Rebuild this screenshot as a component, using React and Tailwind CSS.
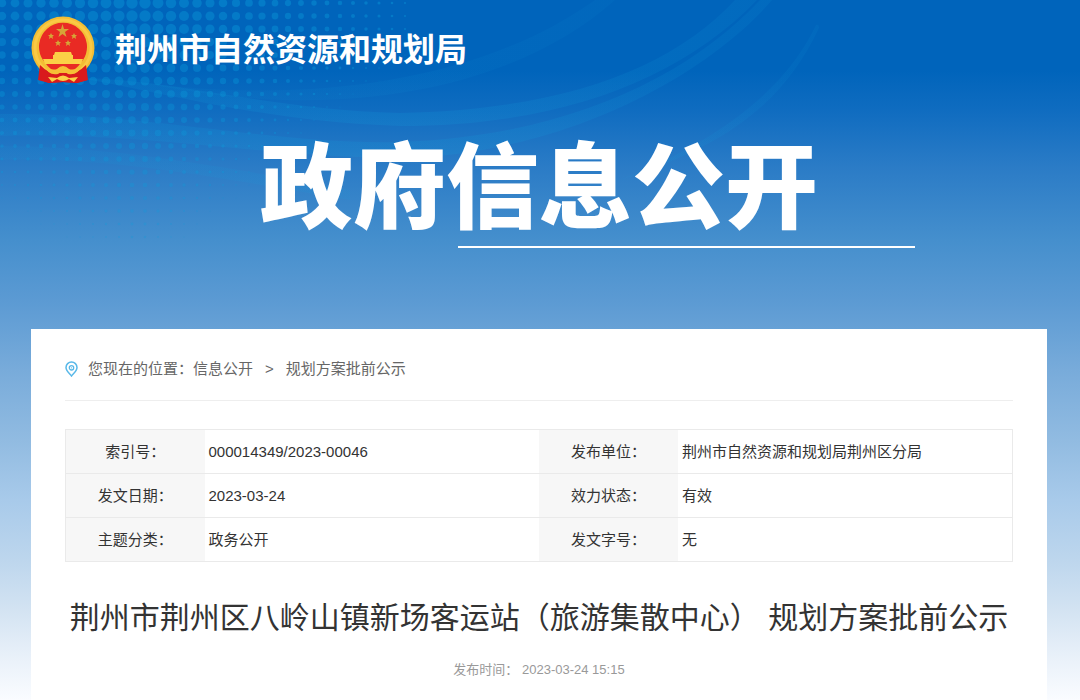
import React from "react";

const rows = [
  ["索引号：", "000014349/2023-00046", "发布单位：", "荆州市自然资源和规划局荆州区分局"],
  ["发文日期：", "2023-03-24", "效力状态：", "有效"],
  ["主题分类：", "政务公开", "发文字号：", "无"],
];

// 背景圆点：靠近 x = 140 处最大，向右和向下逐渐变小
const dots = [];
for (let r = 0; r < 19; r++) {
  for (let c = 0; c < 32; c++) {
    const x = 2 + c * 13;
    const y = 3 + r * 13;
    const size = 5.8 - Math.abs(x - 140) / (x < 140 ? 90 : 56) - Math.max(0, y - 30) / 46;
    if (size > 0.4) dots.push({ x, y, size });
  }
}

function Backdrop() {
  return (
    <svg className="absolute left-0 top-0" width="1080" height="330" viewBox="0 0 1080 330" aria-hidden="true">
      <defs>
        <linearGradient id="swirl" gradientUnits="userSpaceOnUse" x1="0" x2="830" y1="0" y2="0">
          <stop offset="0" stopColor="#12a0dc" stopOpacity="0.14" />
          <stop offset="0.5" stopColor="#12a0dc" stopOpacity="0.2" />
          <stop offset="1" stopColor="#12a0dc" stopOpacity="0.1" />
        </linearGradient>
      </defs>
      <g fill="#0a9ddc">
        {dots.map((d, i) => (
          <circle key={i} cx={d.x} cy={d.y} r={d.size} opacity={0.4 - d.y / 1600} />
        ))}
      </g>
      <g fill="url(#swirl)">
        <path opacity="0.4" d="M150 84C330 105 490 75 595 0L615 0C520 85 350 125 150 84Z" />
        <path opacity="0.9" d="M80 78C180 80 270 110 400 113C560 110 670 70 735 0L757 0C680 80 560 126 400 126C270 122 180 96 80 78Z" />
        <path opacity="0.9" d="M0 114C150 112 270 145 400 142C570 136 690 75 760 0L772 0C710 72 570 154 400 158C270 158 150 132 0 136Z" />
        <path opacity="0.6" d="M0 146C110 146 220 166 350 190L350 200C230 180 110 156 0 160Z" />
        <path opacity="0.8" d="M620 180C720 140 785 90 816 25Q819 24 819 28C785 100 730 145 620 180Z" />
      </g>
    </svg>
  );
}

function Emblem() {
  return (
    <svg className="h-[68px] w-16 shrink-0" viewBox="0 0 64 68" aria-hidden="true">
      <path d="M9 46L55 46L56 64L46 67L32 66L18 67L8 63Z" fill="#d5161b" />
      <circle cx="32" cy="32" r="31.5" fill="#f3bd34" />
      <circle cx="32" cy="32" r="28" fill="none" stroke="#fac945" strokeWidth="3" />
      <path d="M12 44A24 24 0 1 1 52 44Q48 50 43 54L21 54Q16 50 12 44Z" fill="#e92a24" />
      <g fill="#d6a437">
        <path d="M31.5 8L33 13L38 13L34 16L35.5 21L31.5 18L27.5 21L29 16L25 13L30 13Z" />
        <path d="M20 17L21 19L23 19L21.5 20.5L22 23L20 21.5L18 23L18.5 20.5L17 19L19 19Z" />
        <path d="M43 17L44 19L46 19L44.5 20.5L45 23L43 21.5L41 23L41.5 20.5L40 19L42 19Z" />
        <path d="M27 24L28 26L30 26L28.5 27.5L29 30L27 28.5L25 30L25.5 27.5L24 26L26 26Z" />
        <path d="M37 24L38 26L40 26L38.5 27.5L39 30L37 28.5L35 30L35.5 27.5L34 26L36 26Z" />
      </g>
      {/* 城楼 */}
      <path d="M24 36L40 36L41 39L42 39L42 43L52 43L50 48L14 48L12 43L22 43L22 39L23 39Z" fill="#fbd046" />
      {/* 齿轮和绶带 */}
      <path d="M9 49Q18 58 26 57L38 57Q46 58 55 49L57 64L46 67L32 66L18 67L7 64Z" fill="#d91a1c" />
      <path d="M13 49Q20 55 26 53Q32 47 38 53Q44 55 51 49Q47 60 37 58Q32 53 27 58Q17 60 13 49Z" fill="#f6bf36" />
      <path d="M17 61L26 62Q32 57 38 62L47 61L43 66L38 63Q32 67 26 63L21 66Z" fill="#fbd046" />
    </svg>
  );
}

function PinIcon() {
  return (
    <svg className="h-4 w-[13px] shrink-0" viewBox="0 0 13 16" fill="none" stroke="#58b8e8" aria-hidden="true">
      <path d="M6.5 15C4.5 12.5 1 10 1 6.5A5.5 5.5 0 0 1 12 6.5C12 10 8.5 12.5 6.5 15Z" strokeWidth="1.5" />
      <circle cx="6.5" cy="6.8" r="2.2" strokeWidth="1.3" />
      <circle cx="6.5" cy="6.8" r="0.6" fill="#58b8e8" stroke="none" />
    </svg>
  );
}

export default function App() {
  return (
    <div className="relative min-h-screen overflow-hidden bg-[linear-gradient(180deg,#0064bb_0px,#0064bb_70px,#0f6cc0_110px,#2a7bc6_165px,#458fcd_240px,#5b9ad3_300px,#78abda_370px,#91bbe1_440px,#a8caea_500px,#bdd6ed_560px,#d3e3f2_610px,#e8f0f9_655px,#fafcff_700px)] pl-[31px] pr-[33px] font-['Liberation_Sans','Noto_Sans_CJK_SC',sans-serif] text-[#333]">
      <Backdrop />

      {/* 页头 */}
      <header className="relative flex h-[100px] items-center gap-5">
        <Emblem />
        <p className="text-[32px] font-bold leading-10 text-white">荆州市自然资源和规划局</p>
      </header>

      {/* 横幅标题 */}
      <div className="relative h-[229px] pt-8">
        <h1 className="whitespace-nowrap text-center text-[93px] font-black leading-[114px] text-white">政府信息公开</h1>
        <div className="ml-[42%] h-[2px] w-[45%] bg-white"></div>
      </div>

      {/* 正文 */}
      <main className="relative min-h-[371px] bg-white px-[34px]">
        <nav className="flex h-[72px] items-center border-b border-[#eee] pt-2 text-[15px] leading-6 text-[#666]">
          <PinIcon />
          <span className="ml-2.5">您现在的位置：</span>
          <a href="#info">信息公开</a>
          <span className="mx-3">&gt;</span>
          <a href="#plan">规划方案批前公示</a>
        </nav>

        <table className="mt-7 w-full table-fixed border-collapse border border-[#eaeaea] text-[15px] leading-6">
          <colgroup>
            <col className="w-[139px]" />
            <col />
            <col className="w-[139px]" />
            <col />
          </colgroup>
          <tbody>
            {rows.map((row) => (
              <tr key={row[0]} className="h-11 border-b border-[#eaeaea]">
                <th scope="row" className="bg-[#f7f7f7] text-center font-normal">{row[0]}</th>
                <td className="pl-1">{row[1]}</td>
                <th scope="row" className="bg-[#f7f7f7] text-center font-normal">{row[2]}</th>
                <td className="pl-1">{row[3]}</td>
              </tr>
            ))}
          </tbody>
        </table>

        <h2 className="mt-8 whitespace-nowrap text-center text-[30px] leading-[48px]">
          荆州市荆州区八岭山镇新场客运站（旅游集散中心） 规划方案批前公示
        </h2>
        <p className="mt-4 text-center text-[13px] leading-6 text-[#999]">发布时间： 2023-03-24 15:15</p>
      </main>
    </div>
  );
}
